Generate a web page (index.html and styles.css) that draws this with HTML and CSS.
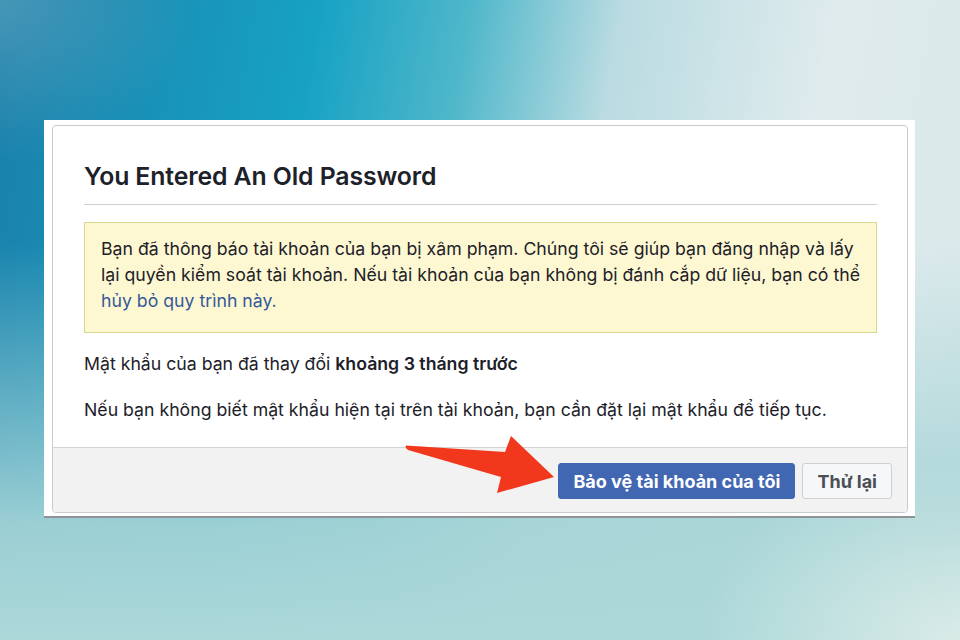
FILE: index.html
```html
<!DOCTYPE html>
<html lang="vi">
<head>
    <meta charset="UTF-8">
    <meta name="viewport" content="width=device-width, initial-scale=1.0">
    <title>You Entered An Old Password</title>
    <link rel="stylesheet" href="styles.css">
</head>
<body>
    <div class="frame">
        <div class="dialog">
            <div class="dialog-body">
                <h2 class="dialog-title">You Entered An Old Password</h2>
                <div class="notice">
                    Bạn đã thông báo tài khoản của bạn bị xâm phạm. Chúng tôi sẽ giúp bạn đăng nhập và lấy
                    lại quyền kiểm soát tài khoản. Nếu tài khoản của bạn không bị đánh cắp dữ liệu, bạn có thể
                    <a href="#" class="notice-link">hủy bỏ quy trình này.</a>
                </div>
                <p class="dialog-text">Mật khẩu của bạn đã thay đổi <strong>khoảng 3 tháng trước</strong></p>
                <p class="dialog-text">Nếu bạn không biết mật khẩu hiện tại trên tài khoản, bạn cần đặt lại mật khẩu để tiếp tục.</p>
            </div>
            <div class="dialog-footer">
                <button type="button" class="btn btn-primary">Bảo vệ tài khoản của tôi</button>
                <button type="button" class="btn">Thử lại</button>
            </div>
        </div>
    </div>

    <!-- red pointer arrow drawn over the footer -->
    <svg class="pointer" width="160" height="66" viewBox="0 0 160 66">
        <path d="M6 13.5 Q4.5 15.5 8 18 L101 45 L97 61 L154 45 L111 4 L105 20 Z" fill="#f2381c"/>
    </svg>
</body>
</html>
```
FILE: styles.css
```css
body {
    margin: 0;
    width: 960px;
    height: 640px;
    overflow: hidden;
    position: relative;
    box-sizing: border-box;
    padding: 120px 0 0 44px;
    font-family: Inter, "Liberation Sans", Arial, sans-serif;
    color: #1d2129;
    background:
        radial-gradient(ellipse 260px 180px at 100% 100%, rgba(222, 237, 233, 0.9), rgba(222, 237, 233, 0)),
        radial-gradient(ellipse 200px 160px at 0 0, rgba(88, 160, 188, 0.7), rgba(88, 160, 188, 0)),
        linear-gradient(to bottom, rgba(166, 212, 214, 0) 38%, rgba(166, 212, 214, 0.92) 82%, #acd8d9 100%),
        linear-gradient(100deg, #1a7faa 0%, #17a2c4 30%, #4fb7ca 44%, #b9dbe1 58%, #dfebed 78%, #d9e8ea 100%);
}

.frame {
    width: 871px;
    box-sizing: border-box;
    background-color: #fff;
    padding: 5px 7px 3px 8px;
    border-bottom: 2px solid #8f9396;
}

.dialog {
    background-color: #fff;
    border: 1px solid #c9cbcf;
    border-radius: 4px;
    overflow: hidden;
}

.dialog-body {
    padding: 35px 30px 24px 31px;
}

.dialog-title {
    margin: 0;
    padding-bottom: 13px;
    border-bottom: 1px solid #d0d1d3;
    font-size: 24.8px;
    line-height: 30px;
    font-weight: 600;
    letter-spacing: -0.1px;
}

.notice {
    margin-top: 17px;
    padding: 13px 16px 18px;
    background-color: #fdf8d2;
    border: 1px solid #d8d78e;
    font-size: 17.7px;
    line-height: 26px;
}

.notice-link {
    color: #365899;
    text-decoration: none;
}

.dialog-text {
    margin: 18px 0 0;
    font-size: 17.7px;
    line-height: 26px;
}

.dialog-text + .dialog-text {
    margin-top: 20px;
}

.dialog-text strong {
    font-weight: 600;
}

.dialog-footer {
    display: flex;
    justify-content: flex-end;
    gap: 7px;
    padding: 15px 15px 13px;
    background-color: #f2f2f2;
    border-top: 1px solid #d3d4d6;
}

.btn {
    height: 36px;
    padding: 0 14px;
    border: 1px solid #ced0d4;
    border-radius: 3px;
    background-color: #f6f7f9;
    color: #4b4f56;
    font-family: inherit;
    font-size: 18px;
    font-weight: 700;
    cursor: pointer;
}

.btn-primary {
    background-color: #4267b2;
    border-color: #4267b2;
    color: #fff;
}

.pointer {
    position: absolute;
    left: 400px;
    top: 432px;
}
```
